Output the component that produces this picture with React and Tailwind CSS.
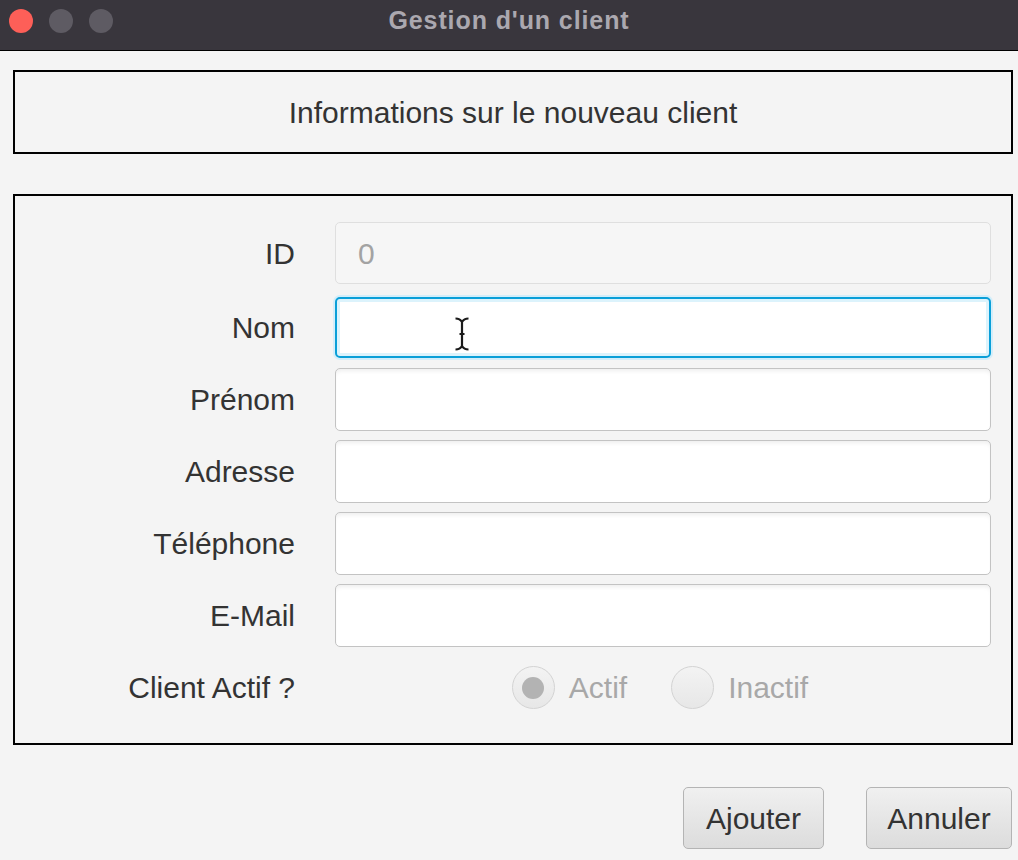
import React from "react";

const fields = [
  { label: "Nom", focused: true },
  { label: "Prénom" },
  { label: "Adresse" },
  { label: "Téléphone" },
  { label: "E-Mail" },
];

function IBeam() {
  return (
    <svg
      className="absolute left-[117px] top-[18px]"
      width="16"
      height="34"
      viewBox="0 0 16 34"
    >
      <path
        d="M1.5 1.5 Q6 1.5 8 5 Q10 1.5 14.5 1.5 M8 5 V29 M1.5 32.5 Q6 32.5 8 29 Q10 32.5 14.5 32.5 M5.5 17 H10.5"
        stroke="#1a1a1a"
        strokeWidth="2.2"
        fill="none"
      />
    </svg>
  );
}

function Radio({ label, checked }) {
  return (
    <div className="flex items-center gap-[14px]">
      <div className="w-[43px] h-[43px] rounded-full border border-[#d3d3d3] bg-gradient-to-b from-[#f3f3f3] to-[#e7e7e7] flex items-center justify-center">
        {checked && <div className="w-[22px] h-[22px] rounded-full bg-[#b3b3b3]" />}
      </div>
      <span className="text-[30px] text-[#a8a8a8]">{label}</span>
    </div>
  );
}

export default function App() {
  return (
    <div className="w-[1018px] h-[860px] bg-[#f4f4f4] flex flex-col font-['Liberation_Sans',Arial,sans-serif] text-[#333333]">
      {/* TITLE BAR */}
      <div className="h-[51px] bg-[#39363d] border-b border-black grid grid-cols-[1fr_auto_1fr] items-center pb-[8px]">
        <div className="flex gap-[16px] pl-[9px]">
          <div className="w-[24px] h-[24px] rounded-full bg-[#fd5f58]" />
          <div className="w-[24px] h-[24px] rounded-full bg-[#5e5b63]" />
          <div className="w-[24px] h-[24px] rounded-full bg-[#5e5b63]" />
        </div>
        <div className="text-[25px] font-bold tracking-[0.9px] text-[#aba8af]">
          Gestion d'un client
        </div>
        <div />
      </div>

      {/* HEADER BOX */}
      <div className="ml-[13px] w-[1000px] mt-[19px] h-[84px] border-2 border-black flex items-center justify-center text-[30px]">
        Informations sur le nouveau client
      </div>

      {/* FORM BOX */}
      <div className="ml-[13px] w-[1000px] mt-[40px] h-[551px] border-2 border-black pt-[26px] flex flex-col gap-[9px]">
        <div className="grid grid-cols-[280px_656px] gap-x-[40px] items-center h-[62px] mb-[3px]">
          <div className="text-right text-[30px]">ID</div>
          <div className="h-[62px] rounded-[5px] border border-[#dfdfdf] bg-[#f6f6f6] flex items-center pl-[22px] text-[30px] text-[#a3a3a3]">
            0
          </div>
        </div>

        {fields.map((f) => (
          <div
            key={f.label}
            className="grid grid-cols-[280px_656px] gap-x-[40px] items-center h-[63px]"
          >
            <div className="text-right text-[30px]">{f.label}</div>
            {f.focused ? (
              <div className="relative h-[61px] rounded-[5px] border-2 border-[#0a9fd8] bg-white shadow-[0_0_0_2px_#d3eefa,inset_0_0_0_3px_#dcf3fc]">
                <IBeam />
              </div>
            ) : (
              <div className="h-[63px] rounded-[5px] border border-[#c3c3c3] bg-white shadow-[inset_0_4px_4px_-2px_rgba(0,0,0,0.07)]" />
            )}
          </div>
        ))}

        <div className="grid grid-cols-[280px_656px] gap-x-[40px] items-center h-[63px]">
          <div className="text-right text-[30px]">Client Actif ?</div>
          <div className="flex items-center justify-center gap-[44px] pr-[6px]">
            <Radio label="Actif" checked />
            <Radio label="Inactif" />
          </div>
        </div>
      </div>

      {/* BUTTONS */}
      <div className="mt-[42px] flex justify-end gap-[42px] pr-[6px]">
        <button className="w-[141px] h-[62px] rounded-[5px] border border-[#b4b4b4] bg-gradient-to-b from-[#f0f0f0] to-[#dcdcdc] text-[30px] text-[#333333]">
          Ajouter
        </button>
        <button className="w-[146px] h-[62px] rounded-[5px] border border-[#b4b4b4] bg-gradient-to-b from-[#f0f0f0] to-[#dcdcdc] text-[30px] text-[#333333]">
          Annuler
        </button>
      </div>
    </div>
  );
}
